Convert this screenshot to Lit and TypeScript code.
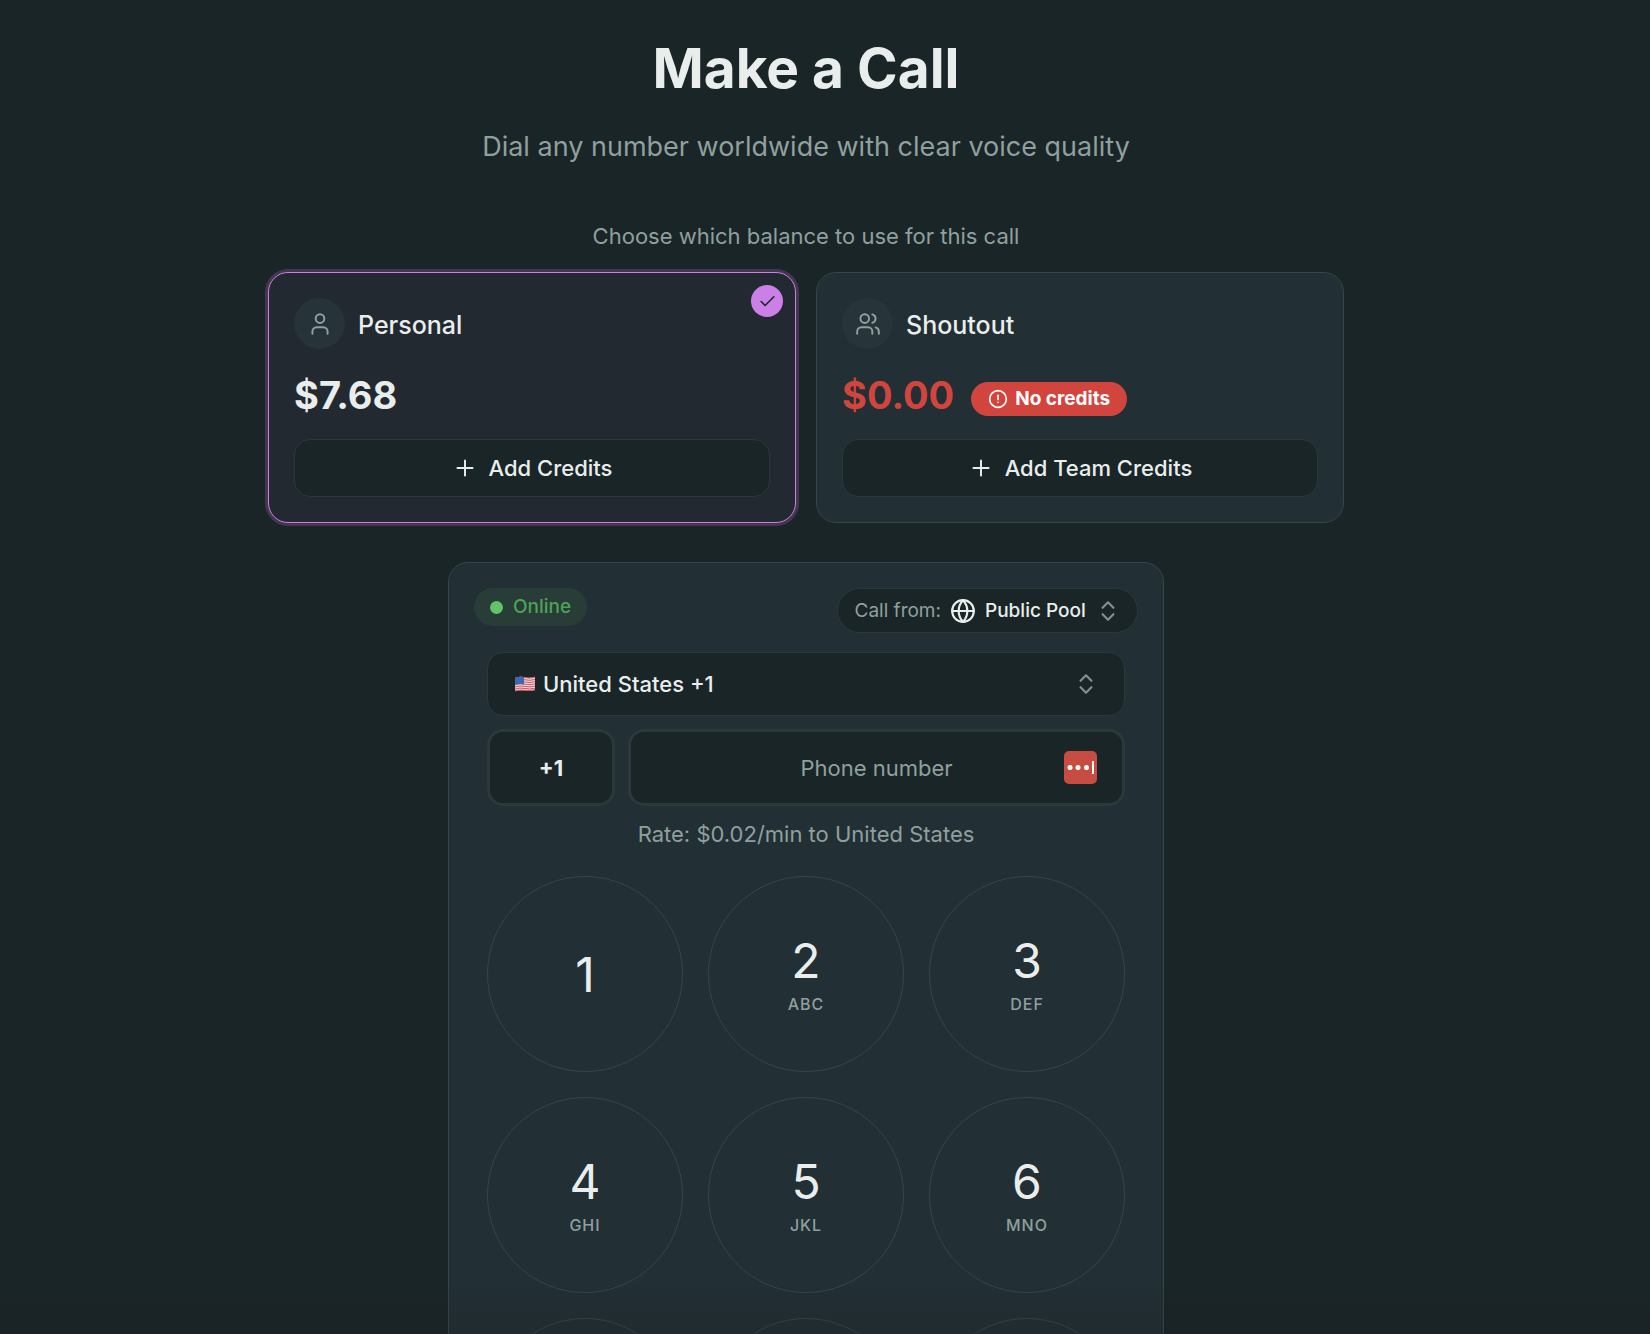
import { LitElement, html, svg, css, nothing } from "lit";
import { customElement, property, state } from "lit/decorators.js";

const ICONS = {
  user: svg`<path d="M19 21v-2a4 4 0 0 0-4-4H9a4 4 0 0 0-4 4v2"/><circle cx="12" cy="7" r="4"/>`,
  users: svg`<path d="M16 21v-2a4 4 0 0 0-4-4H6a4 4 0 0 0-4 4v2"/><circle cx="9" cy="7" r="4"/><path d="M22 21v-2a4 4 0 0 0-3-3.87"/><path d="M16 3.13a4 4 0 0 1 0 7.75"/>`,
  check: svg`<path d="M20 6 9 17l-5-5"/>`,
  plus: svg`<path d="M5 12h14"/><path d="M12 5v14"/>`,
  alert: svg`<circle cx="12" cy="12" r="10"/><path d="M12 7.5v5"/><path d="M12 16h.01"/>`,
  globe: svg`<circle cx="12" cy="12" r="10"/><path d="M12 2a14.5 14.5 0 0 0 0 20 14.5 14.5 0 0 0 0-20"/><path d="M2 12h20"/>`,
  sort: svg`<path d="m7 15 5 5 5-5"/><path d="m7 9 5-5 5 5"/>`,
};

type IconName = keyof typeof ICONS;

const icon = (name: IconName, cls: string) => html`
  <svg class="icon ${cls}" viewBox="0 0 24 24" aria-hidden="true">${ICONS[name]}</svg>
`;

const shared = css`
  :host,
  * {
    box-sizing: border-box;
  }
  button,
  input,
  select {
    font: inherit;
    color: inherit;
    margin: 0;
  }
  button {
    cursor: pointer;
  }
  .icon {
    display: block;
    flex: none;
    fill: none;
    stroke: currentColor;
    stroke-width: 2;
    stroke-linecap: round;
    stroke-linejoin: round;
  }
`;

@customElement("balance-card")
export class BalanceCard extends LitElement {
  @property() name = "";
  @property() amount = "";
  @property() action = "";
  @property() glyph: IconName = "user";
  @property({ type: Boolean }) selected = false;
  @property({ type: Boolean }) empty = false;

  static styles = [
    shared,
    css`
      :host {
        display: block;
      }
      .card {
        position: relative;
        display: flex;
        flex-direction: column;
        height: 100%;
        padding: 25px;
        border: 1px solid #35454a;
        border-radius: 20px;
        background: #222f34;
      }
      .card.selected {
        border-color: #cd7fe8;
        background: #232931;
        box-shadow: 0 0 0 3px #45364f;
      }
      .tick {
        position: absolute;
        top: 12px;
        right: 12px;
        display: grid;
        place-items: center;
        width: 32px;
        height: 32px;
        border-radius: 50%;
        background: #cd7fe8;
        color: #1a2527;
      }
      .tick-icon {
        width: 19px;
        height: 19px;
      }
      .head {
        display: flex;
        align-items: center;
        gap: 13px;
      }
      .avatar {
        display: grid;
        place-items: center;
        width: 51px;
        height: 51px;
        border-radius: 50%;
        background: #27343a;
        color: #8fa09e;
      }
      .selected .avatar {
        background: #263338;
      }
      .avatar-icon {
        width: 26px;
        height: 26px;
        stroke-width: 1.8;
      }
      .name {
        margin: 0;
        padding-top: 2px;
        font-size: 25px;
        line-height: 32px;
        font-weight: 500;
      }
      .amount-row {
        display: flex;
        align-items: center;
        gap: 17px;
        margin-top: 21px;
      }
      .amount {
        margin: 0;
        font-size: 38px;
        line-height: 51px;
        font-weight: 700;
      }
      .amount.empty {
        color: #d1453e;
      }
      .badge {
        display: flex;
        align-items: center;
        gap: 7px;
        height: 34px;
        margin-top: 6px;
        padding: 0 17px;
        border-radius: 17px;
        background: #d1453e;
        color: #ffffff;
        font-size: 19px;
        line-height: 26px;
        font-weight: 700;
      }
      .badge-icon {
        width: 20px;
        height: 20px;
      }
      .action {
        display: flex;
        align-items: center;
        justify-content: center;
        gap: 11px;
        min-height: 58px;
        margin-top: 18px;
        border: 1px solid #2c383b;
        border-radius: 16px;
        background: #1a2527;
        font-size: 22px;
        line-height: 32px;
        font-weight: 500;
      }
      .plus {
        width: 26px;
        height: 26px;
        stroke-width: 1.8;
      }
    `,
  ];

  render() {
    return html`
      <section class="card ${this.selected ? "selected" : ""}">
        ${this.selected ? html`<span class="tick">${icon("check", "tick-icon")}</span>` : nothing}
        <div class="head">
          <span class="avatar">${icon(this.glyph, "avatar-icon")}</span>
          <h2 class="name">${this.name}</h2>
        </div>
        <div class="amount-row">
          <p class="amount ${this.empty ? "empty" : ""}">${this.amount}</p>
          ${this.empty
            ? html`<span class="badge">${icon("alert", "badge-icon")}No credits</span>`
            : nothing}
        </div>
        <button class="action" type="button">${icon("plus", "plus")}${this.action}</button>
      </section>
    `;
  }
}

const KEYS: [string, string][] = [
  ["1", ""],
  ["2", "ABC"],
  ["3", "DEF"],
  ["4", "GHI"],
  ["5", "JKL"],
  ["6", "MNO"],
  ["7", "PQRS"],
  ["8", "TUV"],
  ["9", "WXYZ"],
];

@customElement("dial-pad")
export class DialPad extends LitElement {
  @state() private number = "";

  static styles = [
    shared,
    css`
      :host {
        display: block;
      }
      .panel {
        padding: 25px;
        border: 1px solid #35454a;
        border-radius: 20px;
        background: #222f34;
      }
      .top {
        display: flex;
        align-items: flex-start;
        justify-content: space-between;
        gap: 16px;
        font-size: 19px;
        line-height: 26px;
      }
      .status {
        display: flex;
        align-items: center;
        gap: 10px;
        padding: 6px 16px;
        border-radius: 19px;
        background: #283c38;
        color: #4da354;
        font-weight: 500;
      }
      .dot {
        width: 13px;
        height: 13px;
        border-radius: 50%;
        background: #62c36b;
      }
      .source {
        display: flex;
        align-items: center;
        gap: 9px;
        height: 45px;
        padding: 0 16px 0 17px;
        border: 1px solid #2c383b;
        border-radius: 23px;
        background: #1a2527;
      }
      .source-label {
        color: #8fa09e;
      }
      .globe {
        width: 26px;
        height: 26px;
      }
      .bare {
        appearance: none;
        padding: 0;
        border: 0;
        outline: 0;
        background: none;
        font-weight: 500;
      }
      .sort {
        width: 26px;
        height: 26px;
        color: #84908f;
      }
      .form {
        display: flex;
        flex-direction: column;
        gap: 13px;
        padding: 19px 13px 0;
        font-size: 22px;
        line-height: 32px;
      }
      .country {
        display: flex;
        align-items: center;
        gap: 7px;
        height: 64px;
        padding: 0 25px 0 26px;
        border: 1px solid #2c383b;
        border-radius: 16px;
        background: #1a2527;
      }
      .flag {
        display: block;
        width: 22px;
        height: 16px;
      }
      .country-select {
        flex: 1;
        min-width: 0;
      }
      .numbers {
        display: grid;
        grid-template-columns: 128px 1fr;
        gap: 13px;
      }
      .field {
        display: flex;
        align-items: center;
        height: 77px;
        border: 3px solid #2c383b;
        border-radius: 16px;
        background: #1a2527;
      }
      .prefix {
        justify-content: center;
        font-weight: 700;
      }
      .phone {
        padding: 0 25px;
      }
      .phone-input {
        flex: 1;
        min-width: 0;
        padding-left: 33px;
        text-align: center;
        font-weight: 400;
      }
      .phone-input::placeholder {
        color: #8fa09e;
        opacity: 1;
      }
      .fill {
        display: block;
        padding: 0;
        border: 0;
        border-radius: 5px;
        background: #c74c42;
      }
      .fill-icon {
        display: block;
        width: 33px;
        height: 33px;
      }
      .rate {
        margin: 0;
        line-height: 30px;
        text-align: center;
        color: #8fa09e;
      }
      .keys {
        display: grid;
        grid-template-columns: repeat(3, 1fr);
        gap: 25px;
        padding-top: 14px;
      }
      .key {
        display: flex;
        flex-direction: column;
        align-items: center;
        justify-content: center;
        gap: 8px;
        aspect-ratio: 1;
        padding: 0;
        border: 1px solid #35454a;
        border-radius: 50%;
        background: none;
      }
      .digit {
        font-size: 48px;
        line-height: 51px;
        font-weight: 400;
      }
      .letters {
        font-size: 16px;
        line-height: 20px;
        font-weight: 500;
        letter-spacing: 1px;
        color: #8fa09e;
      }
    `,
  ];

  private press(digit: string) {
    this.number += digit;
  }

  private edit(event: Event) {
    this.number = (event.target as HTMLInputElement).value;
  }

  render() {
    return html`
      <section class="panel">
        <div class="top">
          <span class="status"><span class="dot"></span>Online</span>
          <div class="source">
            <label class="source-label" for="source">Call from:</label>
            ${icon("globe", "globe")}
            <select class="bare" id="source">
              <option>Public Pool</option>
            </select>
            ${icon("sort", "sort")}
          </div>
        </div>
        <div class="form">
          <div class="country">
            <svg class="flag" viewBox="0 0 22 16" aria-hidden="true">
              <path fill="#e9dde0" d="M1 2Q6 0 11 1.200T21 .8V14Q16 15.500 11 14.600T1 15.200Z" />
              <g fill="none" stroke="#d4525e" stroke-width="1">
                <path d="M1 2.200Q6 .4 11 1.600T21 1.300" />
                <path d="M1 4.400Q6 2.600 11 3.800T21 3.500" />
                <path d="M1 6.600Q6 4.800 11 6T21 5.700" />
                <path d="M1 8.800Q6 7 11 8.200T21 7.900" />
                <path d="M1 11Q6 9.200 11 10.400T21 10.100" />
                <path d="M1 13.100Q6 11.300 11 12.500T21 12.200" />
                <path d="M1 14.800Q6 13.600 11 14.300T21 13.700" />
              </g>
              <path fill="#3f68ae" d="M1 2Q6 0 10 1V8.400Q6 7.400 1 9Z" />
            </svg>
            <select class="bare country-select" aria-label="Country">
              <option>United States +1</option>
            </select>
            ${icon("sort", "sort")}
          </div>
          <div class="numbers">
            <div class="field prefix">+1</div>
            <div class="field phone">
              <input
                class="bare phone-input"
                type="tel"
                placeholder="Phone number"
                aria-label="Phone number"
                .value=${this.number}
                @input=${this.edit}
              />
              <button class="fill" type="button" aria-label="Autofill">
                <svg class="fill-icon" viewBox="0 0 33 33" aria-hidden="true">
                  <g fill="#ffffff">
                    <circle cx="6" cy="16.500" r="2.500" />
                    <circle cx="14" cy="16.500" r="2.500" />
                    <circle cx="22.500" cy="16.500" r="2.500" />
                    <rect x="28" y="10" width="2" height="13" rx=".5" />
                  </g>
                </svg>
              </button>
            </div>
          </div>
          <p class="rate">Rate: $0.02/min to United States</p>
          <div class="keys">
            ${KEYS.map(
              ([digit, letters]) => html`
                <button class="key" type="button" @click=${() => this.press(digit)}>
                  <span class="digit">${digit}</span>
                  ${letters ? html`<span class="letters">${letters}</span>` : nothing}
                </button>
              `,
            )}
          </div>
        </div>
      </section>
    `;
  }
}

@customElement("app-root")
export class AppRoot extends LitElement {
  static styles = [
    shared,
    css`
      :host {
        display: block;
        height: 100vh;
        overflow-y: auto;
        scrollbar-width: none;
        background: #1a2527;
        color: #e9eeed;
        font-family: Inter, "Liberation Sans", sans-serif;
      }
      .page {
        display: flex;
        flex-direction: column;
        align-items: center;
        padding: 32px 38px 0 0;
      }
      .title {
        margin: 0;
        font-size: 55px;
        line-height: 72px;
        font-weight: 700;
      }
      .subtitle {
        margin: 24px 0 0;
        font-size: 27px;
        line-height: 38px;
        color: #8fa09e;
      }
      .hint {
        margin: 54px 0 0;
        font-size: 22px;
        line-height: 32px;
        color: #8fa09e;
      }
      .cards {
        display: grid;
        grid-template-columns: 1fr 1fr;
        gap: 20px;
        width: 100%;
        max-width: 1076px;
        margin-top: 20px;
      }
      .dialer {
        width: 100%;
        max-width: 716px;
        margin-top: 39px;
      }
      .fade {
        position: fixed;
        inset: auto 0 0;
        height: 48px;
        background: linear-gradient(transparent, rgb(26 28 30 / 0.15));
        pointer-events: none;
      }
    `,
  ];

  render() {
    return html`
      <main class="page">
        <h1 class="title">Make a Call</h1>
        <p class="subtitle">Dial any number worldwide with clear voice quality</p>
        <p class="hint">Choose which balance to use for this call</p>
        <div class="cards">
          <balance-card
            name="Personal"
            amount="$7.68"
            action="Add Credits"
            glyph="user"
            selected
          ></balance-card>
          <balance-card
            name="Shoutout"
            amount="$0.00"
            action="Add Team Credits"
            glyph="users"
            empty
          ></balance-card>
        </div>
        <dial-pad class="dialer"></dial-pad>
      </main>
      <div class="fade"></div>
    `;
  }
}
